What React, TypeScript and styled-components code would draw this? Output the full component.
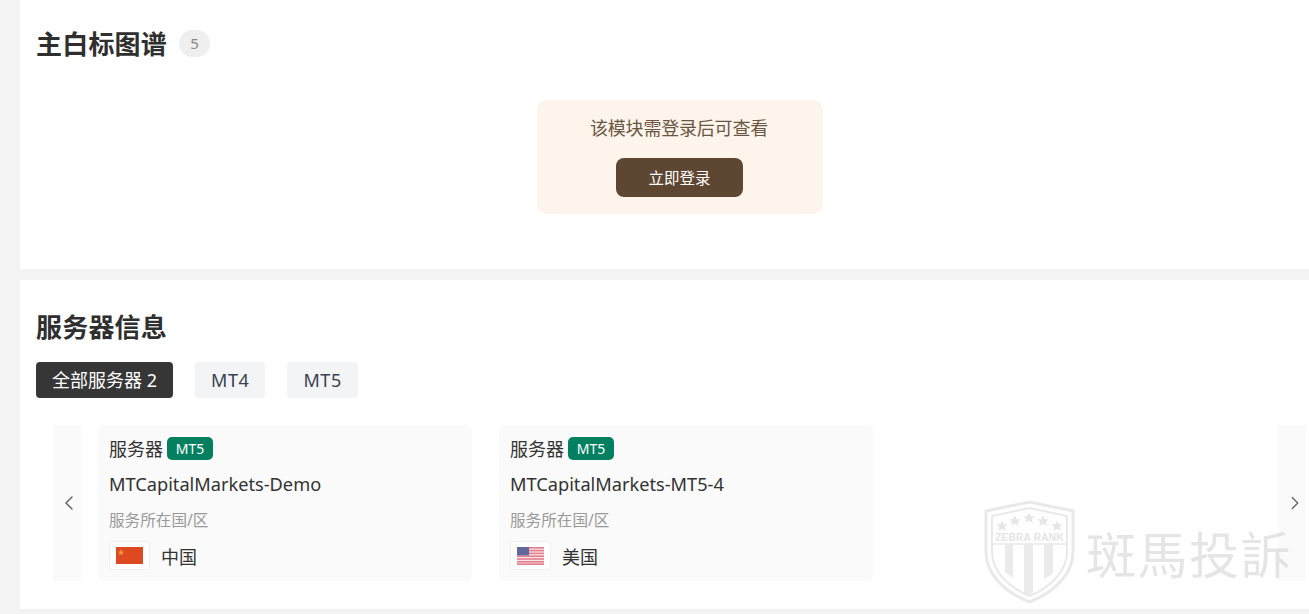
import React from "react";
import styled, { createGlobalStyle } from "styled-components";
import { ChevronLeft, ChevronRight } from "lucide-react";

const GlobalStyle = createGlobalStyle`
  html, body {
    margin: 0;
    padding: 0;
    background-color: #f3f3f3;
    overflow: hidden;
  }
  body {
    font-family: "Noto Sans", "Noto Sans CJK SC", sans-serif;
    color: #333;
  }
  * {
    box-sizing: border-box;
  }
`;

const Page = styled.div`
  position: relative;
  width: 1309px;
  height: 614px;
  padding-left: 20px;
  overflow: hidden;
`;

const Panel = styled.section<{ $height: number; $pad: number }>`
  height: ${(p) => p.$height}px;
  padding: ${(p) => p.$pad}px 3px 0 16px;
  margin-bottom: 11px;
  background-color: #fff;
`;

const TitleRow = styled.div`
  display: flex;
  align-items: center;
  gap: 12px;
  height: 36px;
`;

const Title = styled.h2`
  margin: 0;
  font-size: 26px;
  font-weight: 700;
  line-height: 36px;
  letter-spacing: 0.2px;
  color: #2f2f2f;
`;

const CountBadge = styled.span`
  display: flex;
  align-items: center;
  justify-content: center;
  width: 31px;
  height: 27px;
  margin-top: -2px;
  border-radius: 14px;
  background-color: #efefef;
  font-size: 15px;
  color: #888;
`;

const LoginArea = styled.div`
  display: flex;
  justify-content: center;
  padding-left: 18px;
  margin-top: 38px;
`;

const LoginBox = styled.div`
  display: flex;
  flex-direction: column;
  align-items: center;
  width: 286px;
  height: 114px;
  padding-top: 14px;
  border-radius: 10px;
  background-color: #fdf4ec;
`;

const LoginText = styled.div`
  margin-right: 2px;
  font-size: 18px;
  line-height: 28px;
  letter-spacing: -0.2px;
  color: #6a5643;
`;

const LoginButton = styled.button`
  width: 127px;
  height: 39px;
  margin: 16px 1px 0 0;
  border: none;
  border-radius: 8px;
  background-color: #5d4632;
  font-family: inherit;
  font-size: 15.5px;
  color: #fff;
`;

const Tabs = styled.div`
  display: flex;
  gap: 22px;
  margin-top: 17px;
`;

const Tab = styled.div<{ $active?: boolean }>`
  height: 36px;
  padding: 0 16px;
  border-radius: 4px;
  font-size: 18px;
  line-height: 36px;
  white-space: nowrap;
  letter-spacing: ${(p) => (p.$active ? "0" : "0.6px")};
  background-color: ${(p) => (p.$active ? "#363636" : "#f3f4f6")};
  color: ${(p) => (p.$active ? "#fff" : "#3a4150")};
`;

const Carousel = styled.div`
  display: flex;
  height: 156px;
  margin-top: 27px;
  padding-left: 17px;
`;

const Arrow = styled.div<{ $side: "left" | "right" }>`
  display: flex;
  align-items: center;
  justify-content: center;
  flex: none;
  width: 28px;
  padding-left: ${(p) => (p.$side === "right" ? "6px" : "4px")};
  margin-left: ${(p) => (p.$side === "right" ? "auto" : "0")};
  margin-right: ${(p) => (p.$side === "left" ? "17px" : "0")};
  background-color: #fafafa;
  color: #666;
`;

const Card = styled.div`
  flex: none;
  width: 374px;
  margin-right: 27px;
  padding: 11px 11px 0;
  border-radius: 6px;
  background-color: #fafafa;
`;

const CardHead = styled.div`
  display: flex;
  align-items: center;
  gap: 4px;
  height: 25px;
  font-size: 18px;
  color: #333;
`;

const HeadText = styled.span`
  margin-bottom: 2px;
`;

const TypeBadge = styled.span`
  width: 46px;
  height: 23px;
  border-radius: 5px;
  background-color: #047f60;
  font-size: 14px;
  line-height: 23px;
  text-align: center;
  color: #fff;
`;

const ServerName = styled.div`
  margin-top: 8px;
  font-size: 18.2px;
  line-height: 30px;
  color: #333;
  white-space: nowrap;
`;

const Label = styled.div`
  margin-top: 9px;
  font-size: 15.6px;
  line-height: 24px;
  color: #999;
`;

const Country = styled.div`
  display: flex;
  align-items: center;
  gap: 11px;
  margin-top: 9px;
  font-size: 18px;
  color: #333;
`;

const FlagBox = styled.div`
  display: flex;
  align-items: center;
  justify-content: center;
  width: 41px;
  height: 29px;
  border: 1px solid #f0f0f0;
  border-radius: 4px;
  background-color: #fff;
`;

const Watermark = styled.div`
  position: absolute;
  left: 984px;
  top: 500px;
  display: flex;
  align-items: center;
  gap: 11px;
  pointer-events: none;
`;

const WatermarkText = styled.span`
  font-family: "Noto Sans CJK TC", sans-serif;
  font-size: 50px;
  line-height: 104px;
  letter-spacing: 1.5px;
  color: rgba(190, 190, 190, 0.4);
  white-space: nowrap;
`;

const ChinaFlag = () => (
  <svg width="27" height="17" viewBox="0 0 27 17">
    <rect width="27" height="17" fill="#dd4a22" />
    <polygon
      points="5,2 5.9,4.4 8.4,4.4 6.4,6 7.1,8.4 5,7 2.9,8.4 3.6,6 1.6,4.4 4.1,4.4"
      fill="#eb9a3c"
    />
  </svg>
);

const UsaFlag = () => (
  <svg width="27" height="18" viewBox="0 0 27 18">
    <rect width="27" height="18" fill="#f8e6e8" />
    {[0, 2.8, 5.6, 8.4, 11.2, 14, 16.4].map((y) => (
      <rect key={y} y={y} width="27" height="1.6" fill="#e27f8f" />
    ))}
    <rect width="12" height="8.4" fill="#62679c" />
  </svg>
);

const Shield = () => (
  <svg width="91" height="104" viewBox="0 0 91 104" fill="none">
    <path
      d="M45.5 2 L89 11 V52 C89 76 68 93 45.5 102 C23 93 2 76 2 52 V11 Z"
      stroke="#e9e9e9"
      strokeWidth="3"
    />
    <path
      d="M45.5 8 L83 16 V52 C83 72 65 88 45.5 96 C26 88 8 72 8 52 V16 Z"
      stroke="#e9e9e9"
      strokeWidth="2"
    />
    {[
      [18, 26],
      [31, 21],
      [45, 18],
      [59, 21],
      [73, 26],
    ].map(([x, y]) => (
      <polygon
        key={x}
        transform={`translate(${x} ${y}) scale(1.15)`}
        points="0,-5 1.5,-1.6 5,-1.5 2.3,0.8 3.2,4.2 0,2.3 -3.2,4.2 -2.3,0.8 -5,-1.5 -1.5,-1.6"
        fill="#e6e6e6"
      />
    ))}
    <text
      x="45.5"
      y="41"
      textAnchor="middle"
      fontFamily="Liberation Sans, sans-serif"
      fontSize="10"
      fontWeight="700"
      letterSpacing="0.3"
      fill="#e4e4e4"
    >
      ZEBRA RANK
    </text>
    <path d="M8 44 H83" stroke="#e9e9e9" strokeWidth="1.5" />
    <path d="M21 44 H29 V78 L21 72 Z" fill="#ebebeb" />
    <path d="M40 44 H49 V93 L45 95 L40 93 Z" fill="#ebebeb" />
    <path d="M60 44 H69 V73 L60 79 Z" fill="#ebebeb" />
  </svg>
);

const servers = [
  { name: "MTCapitalMarkets-Demo", country: "中国", flag: <ChinaFlag /> },
  { name: "MTCapitalMarkets-MT5-4", country: "美国", flag: <UsaFlag /> },
];

const App: React.FC = () => {
  return (
    <Page>
      <GlobalStyle />
      <Panel $height={269} $pad={26}>
        <TitleRow>
          <Title>主白标图谱</Title>
          <CountBadge>5</CountBadge>
        </TitleRow>
        <LoginArea>
          <LoginBox>
            <LoginText>该模块需登录后可查看</LoginText>
            <LoginButton>立即登录</LoginButton>
          </LoginBox>
        </LoginArea>
      </Panel>
      <Panel $height={329} $pad={29}>
        <TitleRow>
          <Title>服务器信息</Title>
        </TitleRow>
        <Tabs>
          <Tab $active>全部服务器 2</Tab>
          <Tab>MT4</Tab>
          <Tab>MT5</Tab>
        </Tabs>
        <Carousel>
          <Arrow $side="left">
            <ChevronLeft size={24} strokeWidth={1.5} />
          </Arrow>
          {servers.map((server) => (
            <Card key={server.name}>
              <CardHead>
                <HeadText>服务器</HeadText>
                <TypeBadge>MT5</TypeBadge>
              </CardHead>
              <ServerName>{server.name}</ServerName>
              <Label>服务所在国/区</Label>
              <Country>
                <FlagBox>{server.flag}</FlagBox>
                {server.country}
              </Country>
            </Card>
          ))}
          <Arrow $side="right">
            <ChevronRight size={24} strokeWidth={1.5} />
          </Arrow>
        </Carousel>
      </Panel>
      <Watermark>
        <Shield />
        <WatermarkText>斑馬投訴</WatermarkText>
      </Watermark>
    </Page>
  );
};

export default App;
